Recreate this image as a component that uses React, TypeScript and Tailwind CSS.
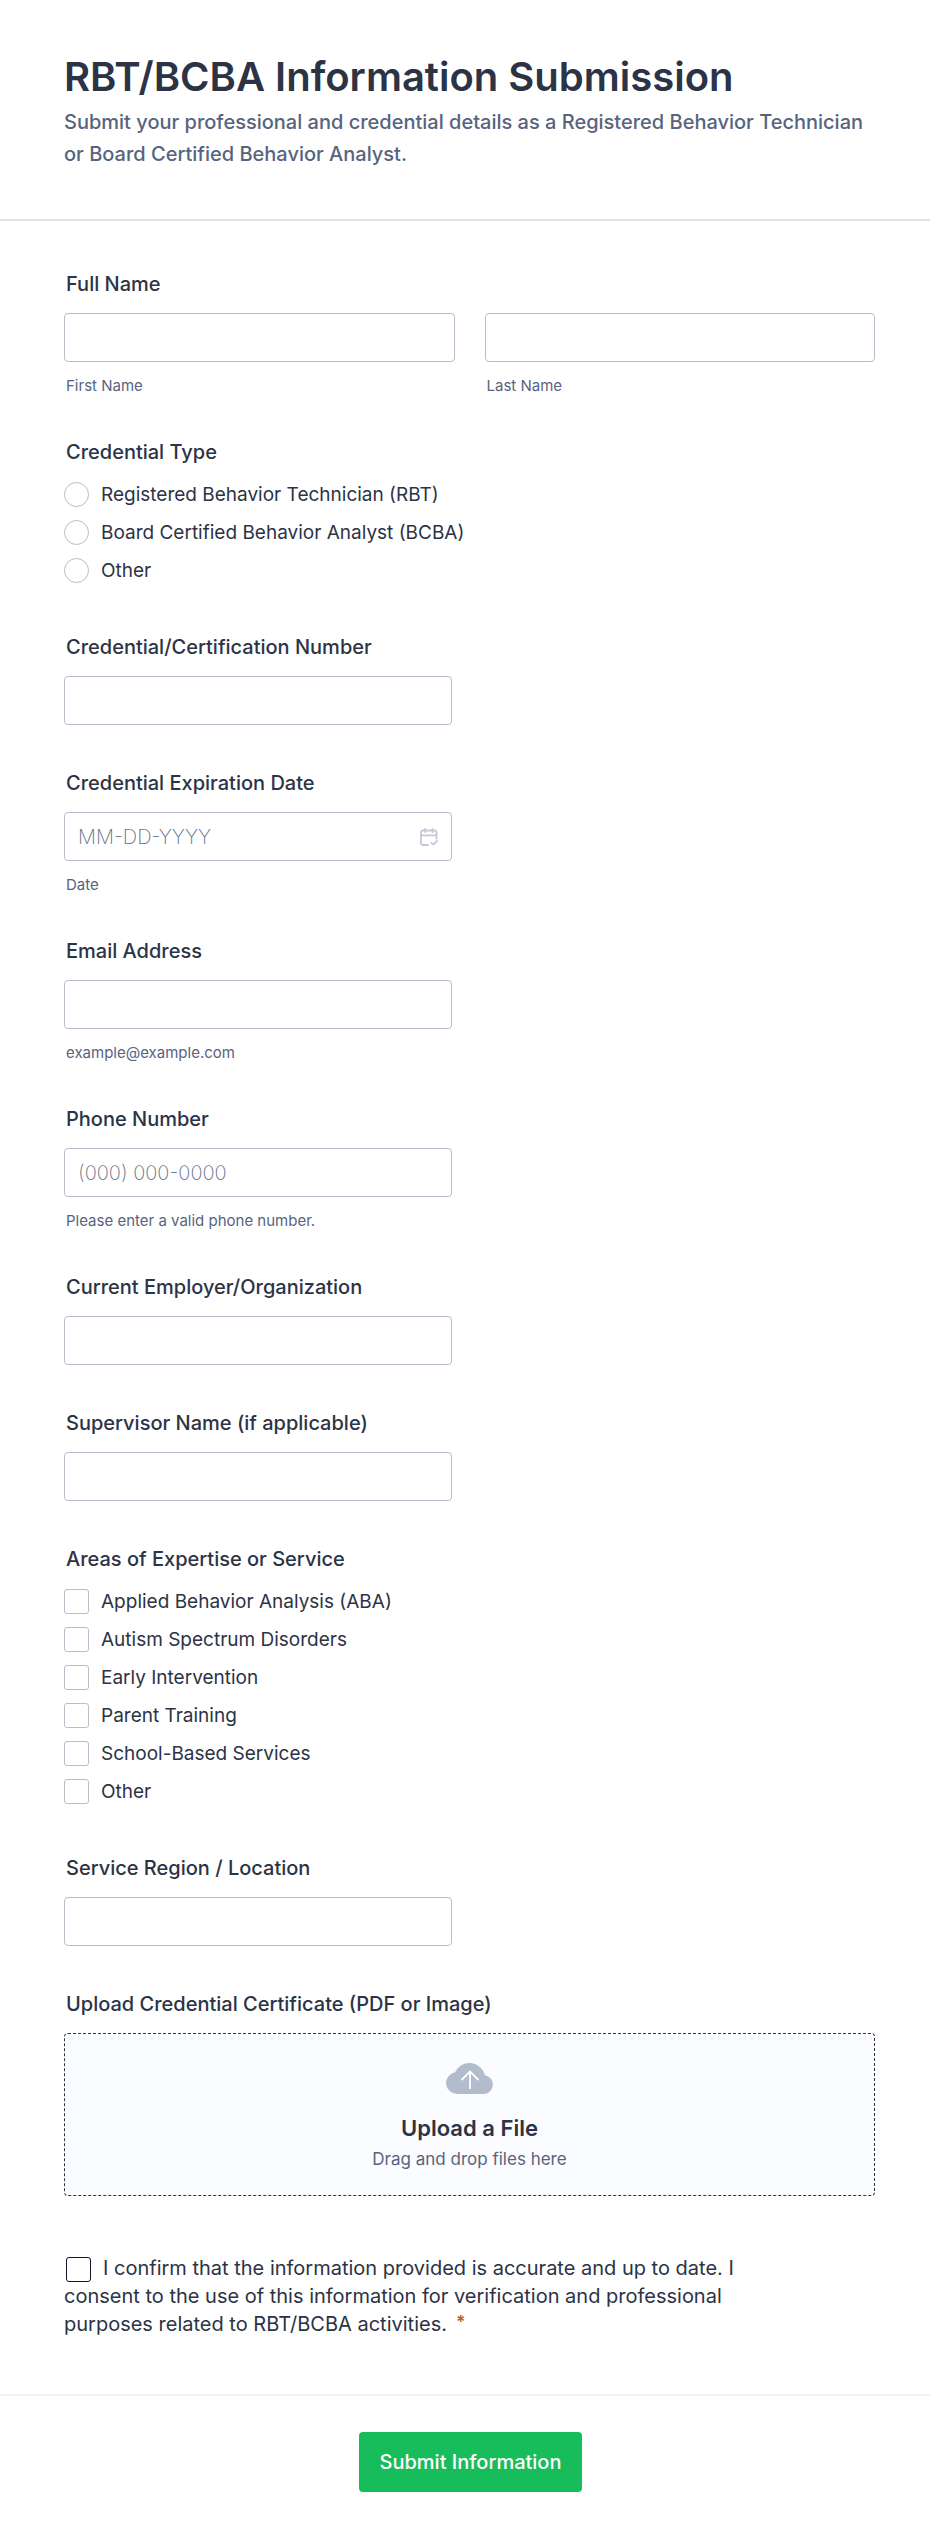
import { useState } from "react";
import type { ReactNode } from "react";

const CREDENTIALS = [
    { id: "rbt", text: "Registered Behavior Technician (RBT)" },
    { id: "bcba", text: "Board Certified Behavior Analyst (BCBA)" },
    { id: "other", text: "Other" },
];

const EXPERTISE = [
    { id: "aba", text: "Applied Behavior Analysis (ABA)" },
    { id: "autism", text: "Autism Spectrum Disorders" },
    { id: "early", text: "Early Intervention" },
    { id: "parent", text: "Parent Training" },
    { id: "school", text: "School-Based Services" },
    { id: "other", text: "Other" },
];

const INPUT =
    "block h-[49px] w-full rounded border border-[#b8bdc9] bg-white px-[13px] text-[20px] font-extralight text-[#2c3345] placeholder:text-[#5f7090] outline-none focus:border-blue-500";

const LABEL = "mb-[15px] block px-[2px] text-[20px] leading-[27px] font-medium";

type TextFieldProps = {
    id: string;
    label: string;
    type?: string;
    placeholder?: string;
    hint?: string;
    children?: ReactNode;
};

const Hint = ({ children }: { children: ReactNode }) => (
    <span className="mt-4 block px-[2px] text-[15px] leading-4 text-[#57647e]">{children}</span>
);

const TextField = ({ id, label, type = "text", placeholder, hint, children }: TextFieldProps) => (
    <div>
        <label htmlFor={id} className={LABEL}>
            {label}
        </label>
        <div className="relative w-full max-w-[388px]">
            <input id={id} name={id} type={type} placeholder={placeholder} className={INPUT} />
            {children}
        </div>
        {hint && <Hint>{hint}</Hint>}
    </div>
);

type ChoiceFieldProps = {
    name: string;
    label: string;
    type: "radio" | "checkbox";
    items: { id: string; text: string }[];
};

const ChoiceField = ({ name, label, type, items }: ChoiceFieldProps) => (
    <fieldset>
        <legend className={LABEL}>{label}</legend>
        <div className="flex flex-col items-start gap-[13px] pt-px pb-[6px]">
            {items.map((item) => (
                <label key={item.id} className="flex items-center gap-3 text-[19px] leading-[25px]">
                    <input
                        type={type}
                        name={name}
                        value={item.id}
                        className={`size-[25px] shrink-0 appearance-none border border-[#b8bdc9] bg-white checked:border-blue-500 checked:bg-blue-500 ${
                            type === "radio" ? "rounded-full" : "rounded-[3px]"
                        }`}
                    />
                    {item.text}
                </label>
            ))}
        </div>
    </fieldset>
);

const CalendarIcon = () => (
    <svg viewBox="0 0 18 18" className="size-[18px]" fill="none" stroke="#c5c9d5" strokeWidth="1.8" strokeLinecap="round" strokeLinejoin="round">
        <path d="M8 17H3a2 2 0 0 1-2-2V4.500a2 2 0 0 1 2-2h11.500a2 2 0 0 1 2 2V10.500" />
        <path d="M1 7.300h15.500M5 1v3M12.500 1v3" />
        <path d="M11.300 14.800l2 1.900 3.600-3.700" />
    </svg>
);

const CloudIcon = () => (
    <svg viewBox="0 0 48 33" className="h-[33px] w-12" fill="none">
        <path d="M11 33A11 11 0 0 1 9 11.200A16 16 0 0 1 39 14.200A9.500 9.500 0 0 1 38.500 33Z" fill="#b3bccc" />
        <path d="M24 28V11M15.500 19L24 10.500l8.500 8.500" stroke="#fff" strokeWidth="1.800" />
    </svg>
);

const App = () => {
    const [fileName, setFileName] = useState("");

    return (
        <form className="w-full bg-white font-['Inter',sans-serif] text-[#2c3345]" onSubmit={(e) => e.preventDefault()}>
            <header className="border-b-2 border-[#dfe1ea] pt-[52px] pr-[55px] pb-[49px] pl-16">
                <h1 className="text-[40px] leading-[50px] font-semibold">RBT/BCBA Information Submission</h1>
                <p className="mt-1 text-[20px] leading-8 font-medium text-[#57647e]">
                    Submit your professional and credential details as a Registered Behavior Technician or Board Certified Behavior
                    Analyst.
                </p>
            </header>

            <div className="flex flex-col gap-[45px] pt-[50px] pr-[55px] pb-14 pl-16">
                <fieldset>
                    <legend className={LABEL}>Full Name</legend>
                    <div className="grid grid-cols-2 gap-[30px]">
                        <label className="flex flex-col-reverse">
                            <Hint>First Name</Hint>
                            <input name="first" type="text" className={INPUT} />
                        </label>
                        <label className="flex flex-col-reverse">
                            <Hint>Last Name</Hint>
                            <input name="last" type="text" className={INPUT} />
                        </label>
                    </div>
                </fieldset>

                <ChoiceField name="credential" label="Credential Type" type="radio" items={CREDENTIALS} />
                <TextField id="number" label="Credential/Certification Number" />
                <TextField id="expiration" label="Credential Expiration Date" placeholder="MM-DD-YYYY" hint="Date">
                    <button type="button" aria-label="Choose date" className="absolute inset-y-0 right-[14px] flex items-center">
                        <CalendarIcon />
                    </button>
                </TextField>
                <TextField id="email" label="Email Address" type="email" hint="example@example.com" />
                <TextField id="phone" label="Phone Number" type="tel" placeholder="(000) 000-0000" hint="Please enter a valid phone number." />
                <TextField id="employer" label="Current Employer/Organization" />
                <TextField id="supervisor" label="Supervisor Name (if applicable)" />
                <ChoiceField name="expertise" label="Areas of Expertise or Service" type="checkbox" items={EXPERTISE} />
                <TextField id="region" label="Service Region / Location" />

                <div>
                    <label htmlFor="certificate" className={LABEL}>
                        Upload Credential Certificate (PDF or Image)
                    </label>
                    <label
                        htmlFor="certificate"
                        className="flex cursor-pointer flex-col items-center rounded border border-dashed border-[#2c3345] bg-[#fbfcff] pt-[27px] pb-[23px] text-center"
                    >
                        <CloudIcon />
                        <span className="mt-5 text-[22px] leading-7 font-semibold">Upload a File</span>
                        <span className="mt-1 text-[17px] leading-[26px] text-[#57647e]">{fileName || "Drag and drop files here"}</span>
                    </label>
                    <input
                        id="certificate"
                        type="file"
                        accept=".pdf,image/*"
                        className="sr-only"
                        onChange={(e) => setFileName(e.target.files?.[0]?.name ?? "")}
                    />
                </div>

                <div className="max-w-[700px] pt-[13px] text-[20px] leading-7">
                    <input
                        id="consent"
                        type="checkbox"
                        required
                        className="-my-1 mr-3 ml-[2px] size-[25px] appearance-none rounded-[3px] border border-[#15122b] bg-white align-middle checked:bg-blue-500"
                    />
                    <label htmlFor="consent">
                        I confirm that the information provided is accurate and up to date. I consent to the use of this information for
                        verification and professional purposes related to RBT/BCBA activities.
                    </label>
                    <span className="ml-[9px] align-text-top text-[17px] leading-[21px] font-bold text-[#c75f28]">*</span>
                </div>
            </div>

            <footer className="flex justify-center border-t-2 border-[#f0f1f6] pt-9 pr-[53px] pb-[49px] pl-16">
                <button type="submit" className="h-[60px] rounded bg-[#18bd5b] px-[21px] text-[20px] font-medium text-white">
                    Submit Information
                </button>
            </footer>
        </form>
    );
};

export default App;
